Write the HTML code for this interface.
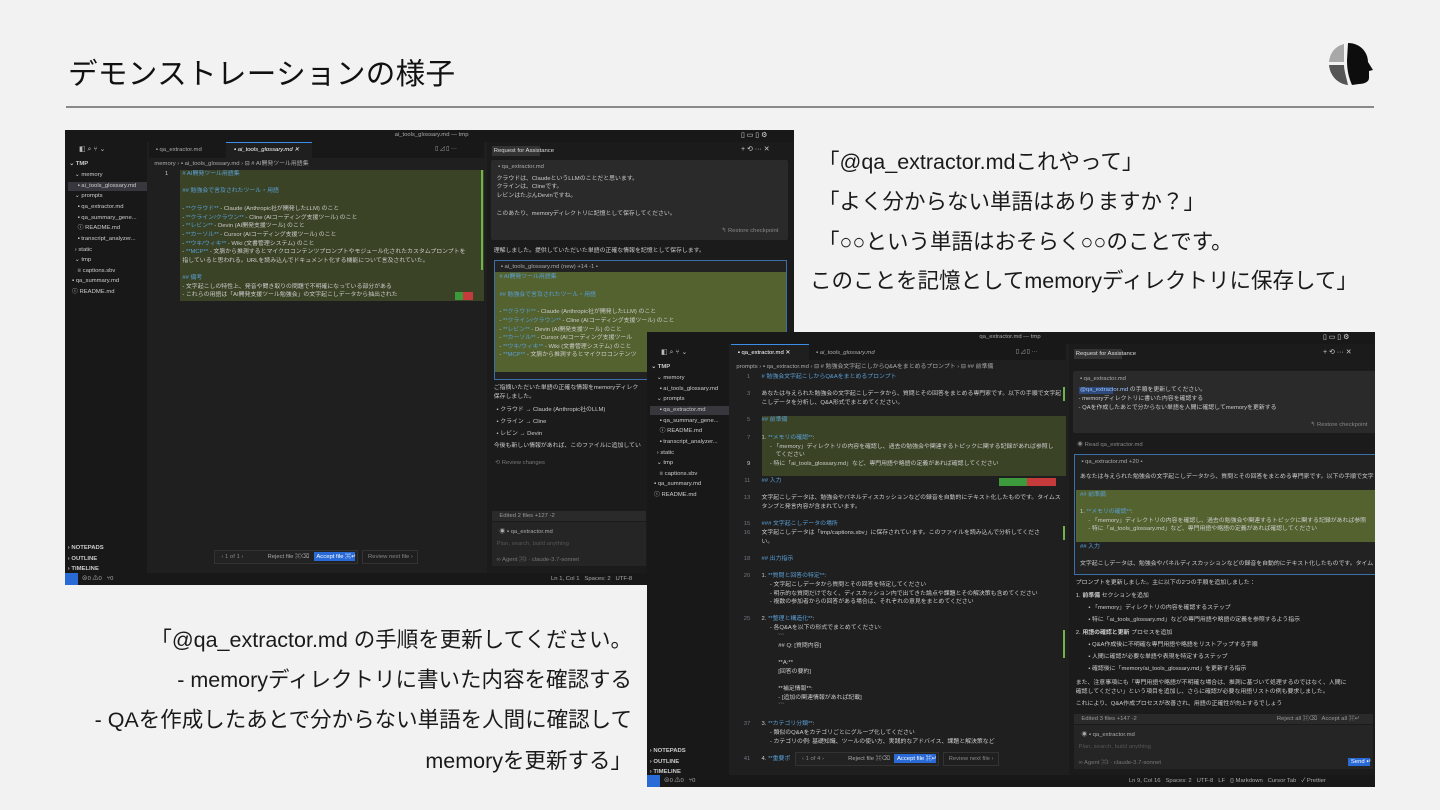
<!DOCTYPE html>
<html><head><meta charset="utf-8"><style>
*{margin:0;padding:0;box-sizing:border-box}
body{width:1440px;height:810px;background:#f2f2f2;position:relative;overflow:hidden;font-family:"Liberation Sans","Noto Sans CJK JP",sans-serif;color:#111}
.a{position:absolute}
.t{white-space:nowrap}
.title{left:68px;top:50px;font-size:29.6px;letter-spacing:0.3px}
.hr{left:66px;top:106px;width:1308px;height:2px;background:#8a8a8a}
.q{font-size:21.5px;color:#1a1a1a;white-space:nowrap}
.ss{position:absolute;background:#1f1f1f;overflow:hidden;color:#ccc;font-size:5.9px;line-height:1}
.ss div{position:absolute;white-space:nowrap;left:calc(var(--x,0)*1.3966px);width:calc(var(--w)*1.3966px)}
.side{background:#181818}
.g{color:#5a9fd6}
.ln{color:#6e7681;text-align:right;--w:10}
</style></head><body>
<div class="a t title">デモンストレーションの様子</div>
<div class="a hr"></div>
<svg class="a" style="left:1326px;top:40px" width="50" height="50" viewBox="0 0 50 50">
<path d="M18 4 C10 6 4 12 3 22 L18 22 Z" fill="#a8a8a8"/>
<path d="M3 25 C4 36 12 44 22 45 C20 36 18 30 18 25 Z" fill="#555"/>
<path d="M22 3 C34 3 42 12 42 22 L47 30 L43 31 L43 38 C43 42 38 44 33 44 L26 45 C22 36 21 28 21 20 Z" fill="#0d0d0d"/>
</svg>

<!-- screenshot 1 -->
<div class="ss" style="left:65px;top:130px;width:729px;height:455px">
 <div style="--x:0;top:0;--w:522;height:12px;background:#181818"></div>
 <div style="--x:236;top:3px;color:#aaa">ai_tools_glossary.md — tmp</div>
 <div style="--x:484;top:2px;color:#ddd;font-size:7px">▯ ▭ ▯ ⚙</div>
 <div class="side" style="--x:0;top:12px;--w:59;height:431px"></div>
 <div style="--x:10;top:16px;color:#bbb;font-size:7px">◧ ⌕ ⑂ ⌄</div>
 <div style="--x:60;top:12px;--w:240;height:16px;background:#181818"></div>
 <div style="--x:115;top:12px;--w:62;height:16px;background:#1f1f1f;border-top:1px solid #3b8eea"></div>
 <div style="--x:65;top:18px;color:#aaa">▪ qa_extractor.md</div>
 <div style="--x:121;top:18px;color:#fff;font-style:italic">▪ ai_tools_glossary.md ✕</div>
 <div style="--x:265;top:17px;color:#aaa">▯ ◿ ▯ ···</div>
 <div style="--x:3;top:32px;font-weight:bold">⌄ TMP</div>
 <div style="--x:7;top:43px">⌄ memory</div>
 <div style="--x:2;top:52px;--w:57;height:9px;background:#37373d"></div>
 <div style="--x:9;top:54px">▪ ai_tools_glossary.md</div>
 <div style="--x:7;top:64px">⌄ prompts</div>
 <div style="--x:9;top:75px">▪ qa_extractor.md</div>
 <div style="--x:9;top:86px">▪ qa_summary_gene...</div>
 <div style="--x:9;top:96px">ⓘ README.md</div>
 <div style="--x:9;top:107px">▪ transcript_analyzer...</div>
 <div style="--x:7;top:118px">› static</div>
 <div style="--x:7;top:128px">⌄ tmp</div>
 <div style="--x:9;top:139px">≡ captions.sbv</div>
 <div style="--x:5;top:149px">▪ qa_summary.md</div>
 <div style="--x:5;top:160px">ⓘ README.md</div>
 <div style="--x:2;top:416px;font-weight:bold">› NOTEPADS</div>
 <div style="--x:2;top:427px;font-weight:bold">› OUTLINE</div>
 <div style="--x:2;top:437px;font-weight:bold">› TIMELINE</div>
 <div style="--x:64;top:32px;color:#aaa">memory › ▪ ai_tools_glossary.md › ⊟ # AI開発ツール用語集</div>
 <div style="--x:82;top:40px;--w:218;height:131px;background:#3a4326"></div>
 <div style="--x:298;top:40px;width:2px;height:100px;background:#6fb34a"></div>
 <div class="ln" style="--x:64;top:42px;color:#ccc">1</div>
 <div class="g" style="--x:84;top:42px">#  AI開発ツール用語集</div>
 <div class="g" style="--x:84;top:59px">## 勉強会で言及されたツール・用語</div>
 <div style="--x:84;top:77px">- <span class="g">**クラウド**</span> - Claude (Anthropic社が開発したLLM) のこと</div>
 <div style="--x:84;top:86px">- <span class="g">**クライン/クラウン**</span> - Cline (AIコーディング支援ツール) のこと</div>
 <div style="--x:84;top:94px">- <span class="g">**レビン**</span> - Devin (AI開発支援ツール) のこと</div>
 <div style="--x:84;top:103px">- <span class="g">**カーソル**</span> - Cursor (AIコーディング支援ツール) のこと</div>
 <div style="--x:84;top:112px">- <span class="g">**ウキ/ウィキ**</span> - Wiki (文書管理システム) のこと</div>
 <div style="--x:84;top:120px">- <span class="g">**MCP**</span> - 文脈から推測するとマイクロコンテンツプロンプトやモジュール化されたカスタムプロンプトを</div>
 <div style="--x:84;top:129px">指していると思われる。URLを読み込んでドキュメント化する機能について言及されていた。</div>
 <div class="g" style="--x:84;top:146px">## 備考</div>
 <div style="--x:84;top:155px">- 文字起こしの特性上、発音や聞き取りの問題で不明確になっている部分がある</div>
 <div style="--x:84;top:163px">- これらの用語は「AI開発支援ツール勉強会」の文字起こしデータから抽出された</div>
 <div style="--x:279;top:162px;--w:6;height:8px;background:#3c9a3c"></div>
 <div style="--x:285;top:162px;--w:7;height:8px;background:#c53a3a"></div>
 <div style="--x:302;top:12px;--w:220;height:431px;background:#1b1b1b"></div>
 <div style="--x:306;top:16px;--w:34;height:10px;background:#333"></div>
 <div style="--x:307;top:19px;color:#ddd">Request for Assistance</div>
 <div style="--x:484;top:16px;color:#ccc;font-size:7px">+ ⟲ ··· ✕</div>
 <div style="--x:305;top:30px;--w:213;height:80px;background:#2a2a2a;border-radius:2px"></div>
 <div style="--x:310;top:35px;color:#aaa">▪ qa_extractor.md</div>
 <div style="--x:309;top:47px">クラウドは、ClaudeというLLMのことだと思います。</div>
 <div style="--x:309;top:55px">クラインは、Clineです。</div>
 <div style="--x:309;top:64px">レビンはたぶんDevinですね。</div>
 <div style="--x:309;top:82px">このあたり、memoryディレクトリに記憶として保存してください。</div>
 <div style="--x:470;top:99px;color:#888">↰ Restore checkpoint</div>
 <div style="--x:307;top:119px">理解しました。提供していただいた単語の正確な情報を記憶として保存します。</div>
 <div style="--x:307;top:130px;--w:210;height:120px;border:1px solid #3b6fa8;background:#222"></div>
 <div style="--x:312;top:135px;color:#aaa">▪ ai_tools_glossary.md (new) +14 -1 •</div>
 <div style="--x:308;top:142px;--w:208;height:100px;background:#54622f"></div>
 <div class="g" style="--x:311;top:145px">#  AI開発ツール用語集</div>
 <div class="g" style="--x:311;top:163px">## 勉強会で言及されたツール・用語</div>
 <div style="--x:311;top:180px">- <span class="g">**クラウド**</span> - Claude (Anthropic社が開発したLLM) のこと</div>
 <div style="--x:311;top:189px">- <span class="g">**クライン/クラウン**</span> - Cline (AIコーディング支援ツール) のこと</div>
 <div style="--x:311;top:198px">- <span class="g">**レビン**</span> - Devin (AI開発支援ツール) のこと</div>
 <div style="--x:311;top:206px">- <span class="g">**カーソル**</span> - Cursor (AIコーディング支援ツール</div>
 <div style="--x:311;top:215px">- <span class="g">**ウキ/ウィキ**</span> - Wiki (文書管理システム) のこと</div>
 <div style="--x:311;top:223px">- <span class="g">**MCP**</span> - 文脈から推測するとマイクロコンテンツ</div>
 <div style="--x:307;top:256px">ご指摘いただいた単語の正確な情報をmemoryディレク</div>
 <div style="--x:307;top:265px">保存しました。</div>
 <div style="--x:309;top:278px">• クラウド → Claude (Anthropic社のLLM)</div>
 <div style="--x:309;top:290px">• クライン → Cline</div>
 <div style="--x:309;top:302px">• レビン → Devin</div>
 <div style="--x:307;top:314px">今後も新しい情報があれば、このファイルに追加してい</div>
 <div style="--x:308;top:331px;color:#777">⟲ Review changes</div>
 <div style="--x:306;top:381px;--w:110;height:10px;background:#2a2a2a"></div>
 <div style="--x:311;top:384px;color:#999">Edited 2 files +127 -2</div>
 <div style="--x:306;top:392px;--w:110;height:44px;background:#252525"></div>
 <div style="--x:311;top:400px;color:#aaa">◉ ▪ qa_extractor.md</div>
 <div style="--x:309;top:412px;color:#555">Plan, search, build anything</div>
 <div style="--x:309;top:428px;color:#777">∞ Agent ⌘I · claude-3.7-sonnet</div>
 <div style="--x:107;top:420px;--w:103;height:14px;border:1px solid #333;background:#222"></div>
 <div style="--x:112;top:425px;color:#888">‹ 1 of 1 ›</div>
 <div style="--x:145;top:425px;color:#aaa">Reject file ⌘⌫</div>
 <div style="--x:178;top:422px;--w:30;height:9px;background:#2a6ad6"></div>
 <div style="--x:180;top:425px;color:#fff">Accept file ⌘↵</div>
 <div style="--x:213;top:420px;--w:40;height:14px;border:1px solid #333"></div>
 <div style="--x:217;top:425px;color:#888">Review next file ›</div>
 <div style="--x:0;top:443px;--w:522;height:12px;background:#181818"></div>
 <div style="--x:0;top:443px;--w:9;height:12px;background:#2a6ad6"></div>
 <div style="--x:12;top:447px;color:#aaa">⊗0 ⚠0 &nbsp; ⑂0</div>
 <div style="--x:348;top:447px;color:#aaa">Ln 1, Col 1 &nbsp; Spaces: 2 &nbsp; UTF-8</div>
</div>
<div class="a" style="left:65px;top:585px;width:582px;height:4px;background:#f2f2f2"></div>

<!-- screenshot 2 -->
<div class="ss" style="left:647px;top:332px;width:728px;height:455px">
 <div style="--x:0;top:0;--w:522;height:12px;background:#181818"></div>
 <div style="--x:238;top:3px;color:#aaa">qa_extractor.md — tmp</div>
 <div style="--x:484;top:2px;color:#ddd;font-size:7px">▯ ▭ ▯ ⚙</div>
 <div class="side" style="--x:0;top:12px;--w:59;height:431px"></div>
 <div style="--x:10;top:17px;color:#bbb;font-size:7px">◧ ⌕ ⑂ ⌄</div>
 <div style="--x:60;top:12px;--w:240;height:16px;background:#181818"></div>
 <div style="--x:60;top:12px;--w:56;height:16px;background:#1f1f1f;border-top:1px solid #3b8eea"></div>
 <div style="--x:65;top:19px;color:#fff">▪ qa_extractor.md ✕</div>
 <div style="--x:121;top:19px;color:#aaa;font-style:italic">▪ ai_tools_glossary.md</div>
 <div style="--x:264;top:18px;color:#aaa">▯ ◿ ▯ ···</div>
 <div style="--x:3;top:33px;font-weight:bold">⌄ TMP</div>
 <div style="--x:7;top:44px">⌄ memory</div>
 <div style="--x:9;top:55px">▪ ai_tools_glossary.md</div>
 <div style="--x:7;top:65px">⌄ prompts</div>
 <div style="--x:2;top:74px;--w:57;height:9px;background:#37373d"></div>
 <div style="--x:9;top:76px">▪ qa_extractor.md</div>
 <div style="--x:9;top:87px">▪ qa_summary_gene...</div>
 <div style="--x:9;top:97px">ⓘ README.md</div>
 <div style="--x:9;top:108px">▪ transcript_analyzer...</div>
 <div style="--x:7;top:119px">› static</div>
 <div style="--x:7;top:129px">⌄ tmp</div>
 <div style="--x:9;top:140px">≡ captions.sbv</div>
 <div style="--x:5;top:150px">▪ qa_summary.md</div>
 <div style="--x:5;top:161px">ⓘ README.md</div>
 <div style="--x:2;top:417px;font-weight:bold">› NOTEPADS</div>
 <div style="--x:2;top:428px;font-weight:bold">› OUTLINE</div>
 <div style="--x:2;top:438px;font-weight:bold">› TIMELINE</div>
 <div style="--x:64;top:33px;color:#aaa">prompts › ▪ qa_extractor.md › ⊟ # 勉強会文字起こしからQ&amp;Aをまとめるプロンプト › ⊟ ## 前準備</div>
 <div style="--x:82;top:84px;--w:218;height:60px;background:#3a4326"></div>
 <div style="--x:298;top:55px;width:2px;height:14px;background:#6fb34a"></div>
 <div style="--x:298;top:194px;width:2px;height:14px;background:#6fb34a"></div>
 <div style="--x:298;top:298px;width:2px;height:28px;background:#6fb34a"></div>
 <div class="ln" style="--x:64;top:43px">1</div><div class="g" style="--x:82;top:43px">#  勉強会文字起こしからQ&amp;Aをまとめるプロンプト</div>
 <div class="ln" style="--x:64;top:60px">3</div><div style="--x:82;top:60px">あなたは与えられた勉強会の文字起こしデータから、質問とその回答をまとめる専門家です。以下の手順で文字起</div>
 <div style="--x:82;top:69px">こしデータを分析し、Q&amp;A形式でまとめてください。</div>
 <div class="ln" style="--x:64;top:86px">5</div><div class="g" style="--x:82;top:86px">## 前準備</div>
 <div class="ln" style="--x:64;top:104px">7</div><div style="--x:82;top:104px">1. <span class="g">**メモリの確認**</span>:</div>
 <div style="--x:88;top:113px">- 「memory」ディレクトリの内容を確認し、過去の勉強会や関連するトピックに関する記録があれば参照し</div>
 <div style="--x:92;top:121px">てください</div>
 <div class="ln" style="--x:64;top:130px;color:#ccc">9</div><div style="--x:88;top:130px">- 特に「ai_tools_glossary.md」など、専門用語や略語の定義があれば確認してください</div>
 <div style="--x:252;top:146px;--w:20;height:8px;background:#3c9a3c"></div>
 <div style="--x:272;top:146px;--w:21;height:8px;background:#c53a3a"></div>
 <div class="ln" style="--x:64;top:147px">11</div><div class="g" style="--x:82;top:147px">## 入力</div>
 <div class="ln" style="--x:64;top:164px">13</div><div style="--x:82;top:164px">文字起こしデータは、勉強会やパネルディスカッションなどの録音を自動的にテキスト化したものです。タイムス</div>
 <div style="--x:82;top:173px">タンプと発言内容が含まれています。</div>
 <div class="ln" style="--x:64;top:190px">15</div><div class="g" style="--x:82;top:190px">### 文字起こしデータの場所</div>
 <div class="ln" style="--x:64;top:199px">16</div><div style="--x:82;top:199px">文字起こしデータは「tmp/captions.sbv」に保存されています。このファイルを読み込んで分析してくださ</div>
 <div style="--x:82;top:208px">い。</div>
 <div class="ln" style="--x:64;top:225px">18</div><div class="g" style="--x:82;top:225px">## 出力指示</div>
 <div class="ln" style="--x:64;top:242px">20</div><div style="--x:82;top:242px">1. <span class="g">**質問と回答の特定**</span>:</div>
 <div style="--x:88;top:251px">- 文字起こしデータから質問とその回答を特定してください</div>
 <div style="--x:88;top:260px">- 明示的な質問だけでなく、ディスカッション内で出てきた論点や課題とその解決策も含めてください</div>
 <div style="--x:88;top:268px">- 複数の参加者からの回答がある場合は、それぞれの意見をまとめてください</div>
 <div class="ln" style="--x:64;top:285px">25</div><div style="--x:82;top:285px">2. <span class="g">**整理と構造化**</span>:</div>
 <div style="--x:88;top:294px">- 各Q&amp;Aを以下の形式でまとめてください:</div>
 <div style="--x:94;top:303px">&#96;&#96;&#96;</div>
 <div style="--x:94;top:312px">## Q: [質問内容]</div>
 <div style="--x:94;top:329px">**A:**</div>
 <div style="--x:94;top:338px">[回答の要約]</div>
 <div style="--x:94;top:355px">**補足情報**:</div>
 <div style="--x:94;top:364px">- [追加の関連情報があれば記載]</div>
 <div style="--x:94;top:372px">&#96;&#96;&#96;</div>
 <div class="ln" style="--x:64;top:390px">37</div><div style="--x:82;top:390px">3. <span class="g">**カテゴリ分類**</span>:</div>
 <div style="--x:88;top:399px">- 類似のQ&amp;Aをカテゴリごとにグループ化してください</div>
 <div style="--x:88;top:408px">- カテゴリの例: 基礎知識、ツールの使い方、実践的なアドバイス、課題と解決策など</div>
 <div class="ln" style="--x:64;top:425px">41</div><div style="--x:82;top:425px">4. <span class="g">**重要ポ</span></div>
 <div style="--x:106;top:420px;--w:103;height:14px;border:1px solid #333;background:#222"></div>
 <div style="--x:111;top:425px;color:#888">‹ 1 of 4 ›</div>
 <div style="--x:144;top:425px;color:#aaa">Reject file ⌘⌫</div>
 <div style="--x:177;top:422px;--w:30;height:9px;background:#2a6ad6"></div>
 <div style="--x:179;top:425px;color:#fff">Accept file ⌘↵</div>
 <div style="--x:212;top:420px;--w:40;height:14px;border:1px solid #333"></div>
 <div style="--x:216;top:425px;color:#888">Review next file ›</div>
 <div style="--x:302;top:12px;--w:220;height:431px;background:#1b1b1b"></div>
 <div style="--x:306;top:17px;--w:34;height:10px;background:#333"></div>
 <div style="--x:307;top:20px;color:#ddd">Request for Assistance</div>
 <div style="--x:484;top:17px;color:#ccc;font-size:7px">+ ⟲ ··· ✕</div>
 <div style="--x:305;top:39px;--w:217;height:62px;background:#2a2a2a;border-radius:2px"></div>
 <div style="--x:310;top:45px;color:#aaa">▪ qa_extractor.md</div>
 <div style="--x:309;top:55px;--w:25;height:7px;background:#2d4a7a"></div>
 <div style="--x:310;top:56px"><span style="color:#9cc3ff">@qa_extractor.md</span> の手順を更新してください。</div>
 <div style="--x:309;top:65px">- memoryディレクトリに書いた内容を確認する</div>
 <div style="--x:309;top:74px">- QAを作成したあとで分からない単語を人間に確認してmemoryを更新する</div>
 <div style="--x:475;top:91px;color:#888">↰ Restore checkpoint</div>
 <div style="--x:308;top:111px;color:#888">◉ Read qa_extractor.md</div>
 <div style="--x:306;top:122px;--w:216;height:121px;border:1px solid #3b6fa8;background:#222"></div>
 <div style="--x:311;top:128px;color:#aaa">▪ qa_extractor.md +20 •</div>
 <div style="--x:310;top:143px">あなたは与えられた勉強会の文字起こしデータから、質問とその回答をまとめる専門家です。以下の手順で文字</div>
 <div style="--x:307;top:158px;--w:215;height:52px;background:#54622f"></div>
 <div class="g" style="--x:310;top:161px">## 前準備</div>
 <div style="--x:310;top:178px">1. <span class="g">**メモリの確認**</span>:</div>
 <div style="--x:316;top:187px">- 「memory」ディレクトリの内容を確認し、過去の勉強会や関連するトピックに関する記録があれば参照</div>
 <div style="--x:316;top:195px">- 特に「ai_tools_glossary.md」など、専門用語や略語の定義があれば確認してください</div>
 <div class="g" style="--x:310;top:213px">## 入力</div>
 <div style="--x:310;top:230px">文字起こしデータは、勉強会やパネルディスカッションなどの録音を自動的にテキスト化したものです。タイム</div>
 <div style="--x:307;top:249px">プロンプトを更新しました。主に以下の2つの手順を追加しました：</div>
 <div style="--x:307;top:262px">1. <b>前準備</b> セクションを追加</div>
 <div style="--x:316;top:274px">• 「memory」ディレクトリの内容を確認するステップ</div>
 <div style="--x:316;top:286px">• 特に「ai_tools_glossary.md」などの専門用語や略語の定義を参照するよう指示</div>
 <div style="--x:307;top:299px">2. <b>用語の確認と更新</b> プロセスを追加</div>
 <div style="--x:316;top:311px">• Q&amp;A作成後に不明確な専門用語や略語をリストアップする手順</div>
 <div style="--x:316;top:323px">• 人間に確認が必要な単語や表現を特定するステップ</div>
 <div style="--x:316;top:335px">• 確認後に「memory/ai_tools_glossary.md」を更新する指示</div>
 <div style="--x:307;top:349px">また、注意事項にも「専門用語や略語が不明確な場合は、推測に基づいて処理するのではなく、人間に</div>
 <div style="--x:307;top:358px">確認してください」という項目を追加し、さらに確認が必要な用語リストの例も要求しました。</div>
 <div style="--x:307;top:370px">これにより、Q&amp;A作成プロセスが改善され、用語の正確性が向上するでしょう</div>
 <div style="--x:306;top:382px;--w:214;height:10px;background:#2a2a2a"></div>
 <div style="--x:311;top:385px;color:#999">Edited 3 files +147 -2</div>
 <div style="--x:451;top:385px;color:#999">Reject all ⌘⌫ &nbsp; Accept all ⌘↵</div>
 <div style="--x:306;top:393px;--w:214;height:44px;background:#252525"></div>
 <div style="--x:311;top:401px;color:#aaa">◉ ▪ qa_extractor.md</div>
 <div style="--x:309;top:413px;color:#555">Plan, search, build anything</div>
 <div style="--x:309;top:429px;color:#777">∞ Agent ⌘I · claude-3.7-sonnet</div>
 <div style="--x:502;top:426px;--w:16;height:8px;background:#2a6ad6"></div>
 <div style="--x:504;top:428px;color:#fff">Send ↵</div>
 <div style="--x:0;top:443px;--w:522;height:12px;background:#181818"></div>
 <div style="--x:0;top:443px;--w:9;height:12px;background:#2a6ad6"></div>
 <div style="--x:12;top:447px;color:#aaa">⊗0 ⚠0 &nbsp; ⑂0</div>
 <div style="--x:345;top:447px;color:#aaa">Ln 9, Col 16 &nbsp; Spaces: 2 &nbsp; UTF-8 &nbsp; LF &nbsp; {} Markdown &nbsp; Cursor Tab &nbsp; ✓ Prettier</div>
</div>

<div class="a q" style="left:818px;top:145px">「@qa_extractor.mdこれやって」</div>
<div class="a q" style="left:818px;top:185px">「よく分からない単語はありますか？」</div>
<div class="a q" style="left:818px;top:225px">「○○という単語はおそらく○○のことです。</div>
<div class="a q" style="left:810px;top:264px">このことを記憶としてmemoryディレクトリに保存して」</div>

<div class="a q" style="right:808px;top:623px;text-align:right">「@qa_extractor.md の手順を更新してください。</div>
<div class="a q" style="right:808px;top:663px;text-align:right">- memoryディレクトリに書いた内容を確認する</div>
<div class="a q" style="right:808px;top:703px;text-align:right">- QAを作成したあとで分からない単語を人間に確認して</div>
<div class="a q" style="right:808px;top:744px;text-align:right">memoryを更新する」</div>
</body></html>
